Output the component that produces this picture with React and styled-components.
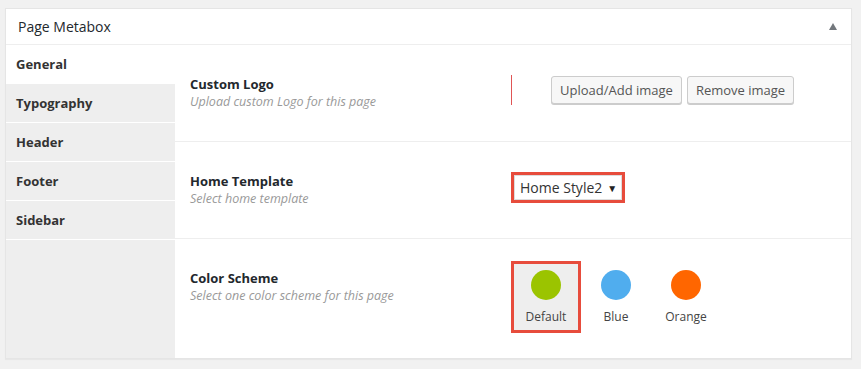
import React, { useState } from "react";
import styled, { createGlobalStyle } from "styled-components";

const GlobalStyle = createGlobalStyle`
  body {
    margin: 0;
    background: #f1f1f1;
    font-family: "Open Sans", "Noto Sans", sans-serif;
    color: #23282d;
  }
`

const Page = styled.div`
  padding: 8px 9px 8px 5px;
`
const Metabox = styled.div`
  background: #fff;
  border: 1px solid #e5e5e5;
  box-shadow: 0 1px 1px rgba(0, 0, 0, 0.04);
`
const BoxHeader = styled.div`
  display: flex;
  justify-content: space-between;
  align-items: center;
  height: 35px;
  padding: 0 12px;
  border-bottom: 1px solid #eee;
  font-size: 14px;
`
const Toggle = styled.span`
  width: 0;
  height: 0;
  margin-right: 2px;
  border-left: 4px solid transparent;
  border-right: 4px solid transparent;
  border-bottom: 7px solid #72777c;
`
const BoxBody = styled.div`
  display: flex;
`
const Tabs = styled.ul`
  width: 169px;
  margin: 0;
  padding: 0;
  list-style: none;
  background: #eee;
`
const Tab = styled.li`
  height: 38px;
  line-height: 38px;
  padding-left: 10px;
  border-bottom: 1px solid #fff;
  font-size: 13px;
  font-weight: 700;
  color: #333;
  background: ${p => (p.$active ? "#fff" : "transparent")};
  cursor: pointer;
`
const Content = styled.div`
  flex: 1;
  display: flex;
  flex-direction: column;
`
const Row = styled.div`
  display: grid;
  grid-template-columns: 321px 1fr;
  align-items: start;
  padding: 30px 0 30px 15px;
  border-bottom: 1px solid #eee;
  &:last-child {
    flex: 1;
    border-bottom: 0;
    padding-bottom: 28px;
  }
`
const Label = styled.div`
  line-height: 18px;
  .title {
    font-size: 13px;
    font-weight: 700;
  }
  .desc {
    font-size: 12.5px;
    font-style: italic;
    color: #999;
  }
`
const Field = styled.div`
  display: flex;
  align-items: center;
  margin-top: ${p => p.$shift || 0}px;
`
const Preview = styled.div`
  width: 39px;
  height: 30px;
  border-left: 1px solid #e05555;
`
const Button = styled.button`
  height: 28px;
  padding: 0 8px;
  margin-right: 5px;
  font-family: inherit;
  font-size: 13px;
  color: #555;
  background: #f7f7f7;
  border: 1px solid #ccc;
  border-radius: 3px;
  box-shadow: 0 1px 0 #ccc;
  cursor: pointer;
`
const Highlight = styled.div`
  display: inline-flex;
  border: 3px solid ${p => (p.$on ? "#e74c3c" : "transparent")};
`
const Select = styled.div`
  display: flex;
  align-items: center;
  gap: 5px;
  height: 23px;
  padding: 0 4px 0 5px;
  border: 1px solid #ddd;
  font-size: 14px;
  color: #333;
  .arrow {
    font-size: 10px;
    color: #222;
  }
`
const Schemes = styled.div`
  display: flex;
  gap: 6px;
  padding-left: 3px;
`
const Scheme = styled.div`
  width: 64px;
  padding: 6px 0 4px;
  display: flex;
  flex-direction: column;
  align-items: center;
  gap: 8px;
  background: ${p => (p.$active ? "#eee" : "transparent")};
  outline: ${p => (p.$active ? "3px solid #e74c3c" : "0")};
  font-size: 12px;
  line-height: 18px;
  color: #444;
  cursor: pointer;
`
const Dot = styled.span`
  width: 30px;
  height: 30px;
  border-radius: 50%;
  background: ${p => p.$color};
`

const tabs = ["General", "Typography", "Header", "Footer", "Sidebar"]
const schemes = [
  { name: "Default", color: "#9bc400" },
  { name: "Blue", color: "#50adee" },
  { name: "Orange", color: "#ff6600" }
]

const App = () => {
  const [tab, setTab] = useState("General")
  const [scheme, setScheme] = useState("Default")
  return <Page>
    <GlobalStyle />
    <Metabox>
      <BoxHeader>
        <span>Page Metabox</span>
        <Toggle />
      </BoxHeader>
      <BoxBody>
        <Tabs>
          {tabs.map(t => (
            <Tab key={t} $active={t === tab} onClick={() => setTab(t)}>{t}</Tab>
          ))}
        </Tabs>
        <Content>
          <Row>
            <Label>
              <div className="title">Custom Logo</div>
              <div className="desc">Upload custom Logo for this page</div>
            </Label>
            <Field>
              <Preview />
              <Button>Upload/Add image</Button>
              <Button>Remove image</Button>
            </Field>
          </Row>
          <Row>
            <Label>
              <div className="title">Home Template</div>
              <div className="desc">Select home template</div>
            </Label>
            <Field>
              <Highlight $on>
                <Select>
                  <span>Home Style2</span>
                  <span className="arrow">▼</span>
                </Select>
              </Highlight>
            </Field>
          </Row>
          <Row>
            <Label>
              <div className="title">Color Scheme</div>
              <div className="desc">Select one color scheme for this page</div>
            </Label>
            <Field $shift={-5}>
              <Schemes>
                {schemes.map(s => (
                  <Scheme key={s.name} $active={s.name === scheme} onClick={() => setScheme(s.name)}>
                    <Dot $color={s.color} />
                    {s.name}
                  </Scheme>
                ))}
              </Schemes>
            </Field>
          </Row>
        </Content>
      </BoxBody>
    </Metabox>
  </Page>
}

export default App
